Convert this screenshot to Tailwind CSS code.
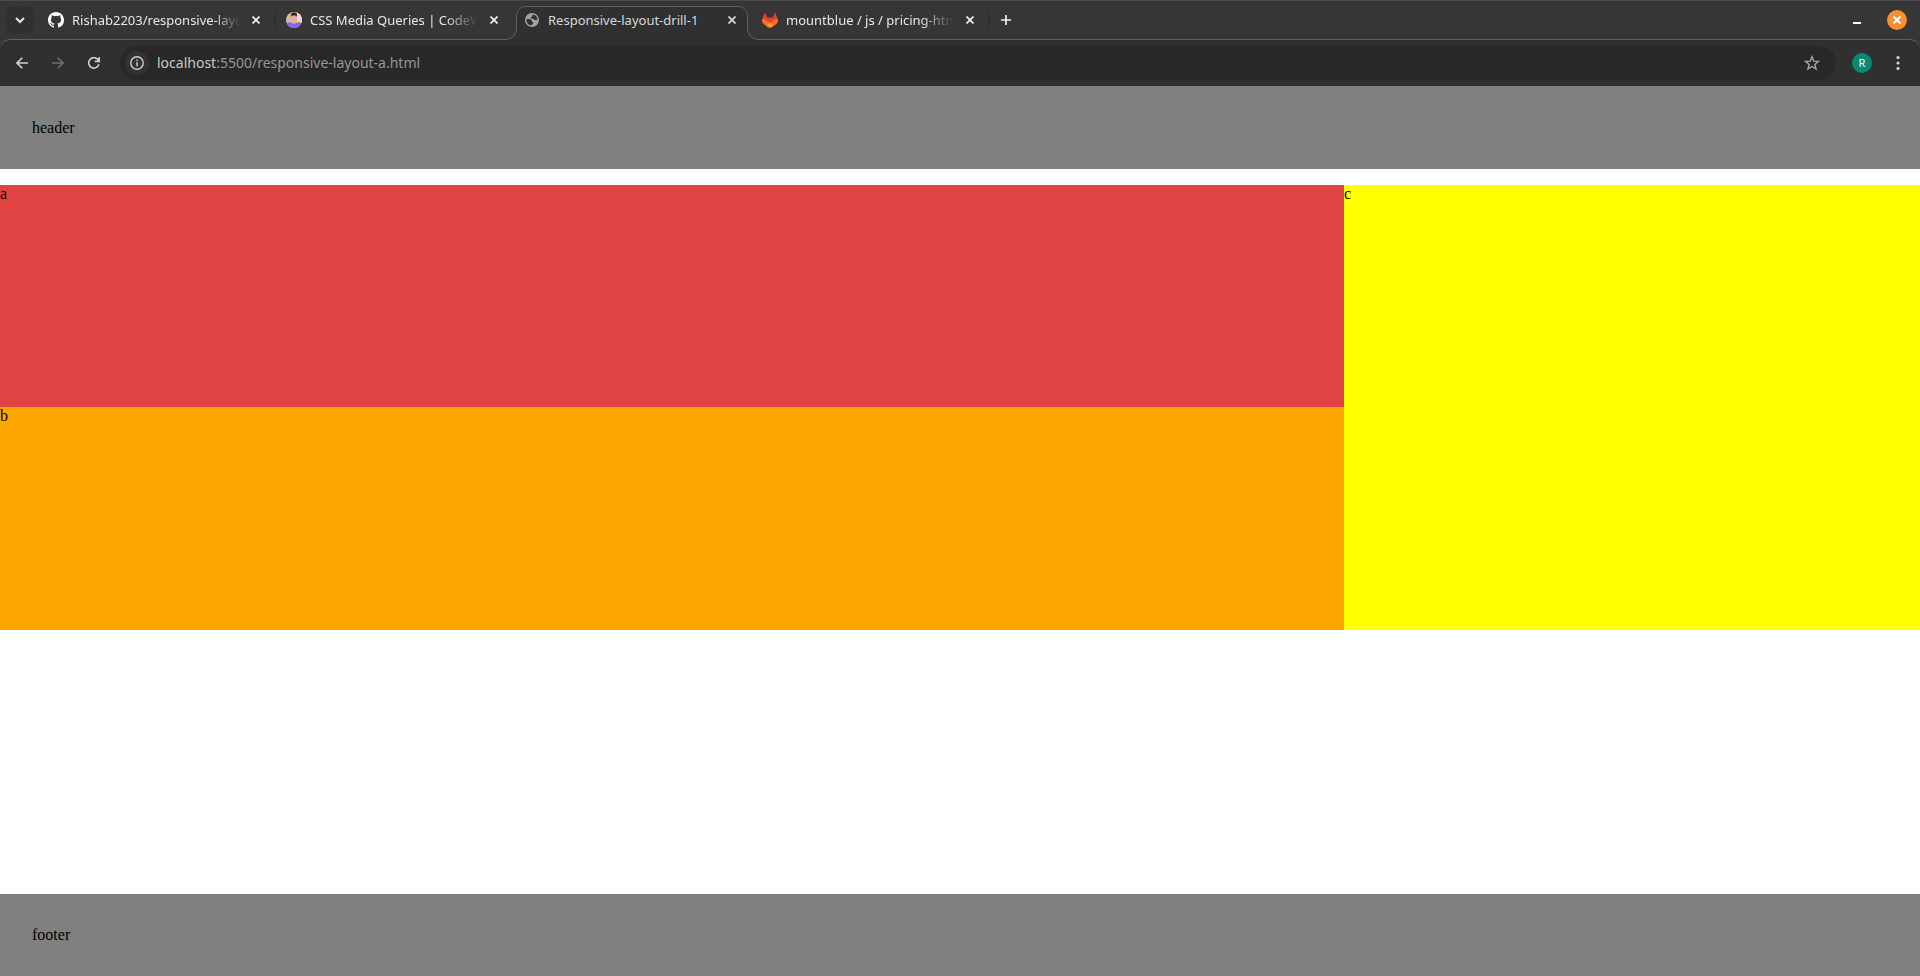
<!DOCTYPE html>
<html lang="en">
<head>
<meta charset="utf-8">
<title>Responsive-layout-drill-1</title>
<script src="https://cdn.jsdelivr.net/npm/@tailwindcss/browser@4"></script>
</head>
<body class="flex min-h-screen flex-col bg-white font-['Liberation_Serif',serif] text-base text-black">

<div class="bg-[#363636] font-['Noto_Sans',sans-serif] text-[#e8e8e8]">
  <nav aria-label="Tabs" class="flex h-[39px] items-center border-t border-[#4b4b4b] px-1.5">
    <button aria-label="Search tabs" class="mr-1.5 flex size-7 items-center justify-center rounded-[10px] bg-[#303030]">
      <svg class="size-2.5" viewBox="0 0 10 10" fill="none" stroke="#e8e8e8" stroke-width="2"><path d="M1 3l4 4 4-4"/></svg>
    </button>

    <div class="flex h-8 w-[232px] items-center px-2">
      <svg class="size-4 shrink-0" viewBox="0 0 16 16" fill="#fff"><path d="M8 0C3.58 0 0 3.58 0 8c0 3.54 2.29 6.53 5.47 7.59.4.07.55-.17.55-.38 0-.19-.01-.82-.01-1.49-2.01.37-2.53-.49-2.69-.94-.09-.23-.48-.94-.82-1.13-.28-.15-.68-.52-.01-.53.63-.01 1.08.58 1.23.82.72 1.21 1.87.87 2.33.66.07-.52.28-.87.51-1.07-1.78-.2-3.64-.89-3.64-3.95 0-.87.31-1.59.82-2.15-.08-.2-.36-1.02.08-2.12 0 0 .67-.21 2.2.82a7.6 7.6 0 0 1 4 0c1.53-1.04 2.2-.82 2.2-.82.44 1.1.16 1.92.08 2.12.51.56.82 1.27.82 2.15 0 3.07-1.87 3.75-3.65 3.95.29.25.54.73.54 1.48 0 1.07-.01 1.93-.01 2.2 0 .21.15.46.55.38A8.01 8.01 0 0 0 16 8c0-4.42-3.58-8-8-8z"/></svg>
      <span class="ml-2 w-[168px] whitespace-nowrap mask-r-from-85% text-[13px] leading-5">Rishab2203/responsive-layo</span>
      <button aria-label="Close tab" class="ml-3 flex size-2 items-center justify-center"><svg class="size-2 shrink-0" viewBox="0 0 8 8" stroke="#f0f0f0" stroke-width="1.7"><path d="M.5.5l7 7M7.5.5l-7 7"/></svg></button>
    </div>
    <span class="mx-0.5 h-4 w-0.5 bg-[#303030]"></span>

    <div class="flex h-8 w-[232px] items-center px-2">
      <svg class="size-4 shrink-0" viewBox="0 0 16 16">
        <clipPath id="face"><circle cx="8" cy="8" r="8"/></clipPath>
        <g clip-path="url(#face)"><path fill="#d8b79c" d="M0 0h16v16H0z"/><path fill="#f0d3d3" d="M11 0h5v11h-5z"/><path fill="#8465f5" d="M1 16c0-3-1-5 2-6l3 1h4l3-1c3 1 2 3 2 6z"/><path fill="#e6a996" d="M5.500 3.500h5V8c0 2-1 4-2.500 4S5.500 10 5.500 8z"/><path fill="#2b2024" d="M5 5C4.500 2 5.500.5 8 .5S11.500 2 11 5l-.8-1.500H5.800z"/></g>
      </svg>
      <span class="ml-2 w-[168px] whitespace-nowrap mask-r-from-80% text-[13px] leading-5">CSS Media Queries | CodeWi</span>
      <button aria-label="Close tab" class="ml-3 flex size-2 items-center justify-center"><svg class="size-2 shrink-0" viewBox="0 0 8 8" stroke="#f0f0f0" stroke-width="1.7"><path d="M.5.5l7 7M7.5.5l-7 7"/></svg></button>
    </div>
    <span class="mx-0.5 w-0.5"></span>

    <div class="relative z-10 flex h-8 w-[232px] items-center px-2">
      <svg class="absolute -left-[11px] top-[2px] h-[34px] w-[254px]" viewBox="0 0 254 34" fill="#303030"><path d="M0 34v-.5C7 33.500 11.500 29 11.500 22V10.500c0-6 4-10 10-10h211c6 0 10 4 10 10V22c0 7 4.500 11.500 11.500 11.500v.5z"/><path fill="none" stroke="#626262" d="M0 33.500c7 0 11.500-4.500 11.500-11.500V10.500c0-6 4-10 10-10h211c6 0 10 4 10 10V22c0 7 4.500 11.500 11.500 11.500"/></svg>
      <svg class="relative size-4 shrink-0" viewBox="0 0 16 16"><circle cx="8" cy="8" r="7" fill="#9da1a8"/><path fill="#303030" d="M2.500 7.200C4 7 6.500 7 7.500 8c.8.900.2 2 1.200 2.200.8.200.8 1 .3 1.500-.6.500-1.500.6-1.500 1.800A5.500 5.500 0 0 1 2.500 7.200zM8.700 2.500c2.600.3 4.600 2.300 4.800 4.800-1 .9-2.700 1-3.500.1-.6-.8-1.500-.4-2.500-.8-1.200-.5-.8-1.900.3-1.900.9 0 .4-1.300.9-2.200z"/></svg>
      <span class="relative ml-2 w-[168px] whitespace-nowrap text-[13px] leading-5 text-[#d8d8d8]">Responsive-layout-drill-1</span>
      <button aria-label="Close tab" class="relative ml-3 flex size-2 items-center justify-center"><svg class="size-2 shrink-0" viewBox="0 0 8 8" stroke="#d8d8d8" stroke-width="1.7"><path d="M.5.5l7 7M7.5.5l-7 7"/></svg></button>
    </div>
    <span class="mx-0.5 w-0.5"></span>

    <div class="flex h-8 w-[232px] items-center px-2">
      <svg class="size-4 shrink-0" viewBox="0 0 16 16"><path fill="#e24329" d="M0 8L2.800.3 5.300 5.500h5.400L13.200.3 16 8l-8 7.700z"/><path fill="#fc6d26" d="M.3 7C2.500 7 5 8 8 11.200 11 8 13.500 7 15.700 7c.8 2.300 0 4-1.700 5.300l-4 3.100H6l-4-3.100C.3 11-.5 9.300.3 7z"/><path fill="#fca326" d="M8 10.600l3 2.300-3 2.900-3-2.900z"/></svg>
      <span class="ml-2 w-[168px] whitespace-nowrap mask-r-from-80% text-[13px] leading-5">mountblue / js / pricing-htm</span>
      <button aria-label="Close tab" class="ml-3 flex size-2 items-center justify-center"><svg class="size-2 shrink-0" viewBox="0 0 8 8" stroke="#f0f0f0" stroke-width="1.7"><path d="M.5.5l7 7M7.5.5l-7 7"/></svg></button>
    </div>
    <span class="ml-0.5 h-4 w-0.5 bg-[#303030]"></span>
    <button aria-label="New tab" class="ml-0.5 flex size-7 items-center justify-center"><svg class="size-2.5" viewBox="0 0 10 10" stroke="#f0f0f0" stroke-width="1.7"><path d="M0 5h10M5 0v10"/></svg></button>

    <div class="ml-auto flex items-center gap-[22px] pr-[7px]">
      <button aria-label="Minimize" class="flex h-5 w-4 items-center justify-center pt-1.5"><span class="h-0.5 w-2 bg-white"></span></button>
      <button aria-label="Close window" class="flex size-5 items-center justify-center rounded-full bg-[#f68f30]"><svg class="size-2" viewBox="0 0 8 8" stroke="#fff" stroke-width="2"><path d="M.5.5l7 7M7.5.5l-7 7"/></svg></button>
    </div>
  </nav>

  <div class="flex h-[47px] items-center rounded-t-[10px] border-t border-[#626262] bg-[#303030] pl-1 pr-2.5">
    <button aria-label="Back" class="flex size-9 items-center justify-center"><svg class="size-3" viewBox="0 0 12 12" fill="none" stroke="#d0d0d0" stroke-width="1.600"><path d="M12 6H1M6.300.7L1 6l5.300 5.300"/></svg></button>
    <button aria-label="Forward" class="flex size-9 items-center justify-center"><svg class="size-3" viewBox="0 0 12 12" fill="none" stroke="#6e6e6e" stroke-width="1.600"><path d="M0 6h11M5.700.7L11 6l-5.300 5.300"/></svg></button>
    <button aria-label="Reload" class="flex size-9 items-center justify-center"><svg class="size-3" viewBox="0 0 12 12" fill="none" stroke="#d0d0d0" stroke-width="1.600"><path d="M10.900 7.300A5.200 5.200 0 1 1 9.800 2.400L11 3.700M11.200 0v4.400H6.800"/></svg></button>
    <div class="ml-2 flex h-[34px] flex-1 items-center rounded-full bg-[#282828] pl-[5px] pr-4">
      <button aria-label="View site information" class="flex size-6 items-center justify-center rounded-full bg-[#333]"><svg class="size-3.5" viewBox="0 0 14 14" fill="none" stroke="#cfcfcf" stroke-width="1.400"><circle cx="7" cy="7" r="6.200"/><path d="M7 6v4.300M7 3.500v1.500"/></svg></button>
      <a href="http://localhost:5500/responsive-layout-a.html" class="ml-2 flex-1 text-sm text-[#979797]"><span class="text-[#c8c8c8]">localhost</span>:5500/responsive-layout-a.html</a>
      <button aria-label="Bookmark this tab" class="flex size-4 items-center justify-center"><svg class="size-4 shrink-0" viewBox="0 0 16 16" fill="none" stroke="#a5a5a5" stroke-width="1.400"><path d="M8 1.800l1.700 4.300 4.700.3-3.600 3 1.200 4.600-4-2.500L4 14l1.200-4.600-3.600-3 4.700-.3z"/></svg></button>
    </div>
    <button aria-label="Profile" class="ml-4 flex size-5 items-center justify-center rounded-full bg-[#068978] text-[11px] text-white">R</button>
    <button aria-label="Menu" class="ml-[14px] flex size-6 items-center justify-center"><svg class="h-3.5 w-1" viewBox="0 0 4 14" fill="#cfcfcf"><circle cx="2" cy="1.600" r="1.600"/><circle cx="2" cy="7" r="1.600"/><circle cx="2" cy="12.400" r="1.600"/></svg></button>
  </div>
</div>

<header class="bg-[gray] px-8 py-8 leading-[19px]">header</header>
<main class="mt-4 mb-8 grid min-h-[445px] grid-cols-[7fr_3fr] grid-rows-[222fr_223fr] leading-[18px]">
  <section class="bg-[#e24444]">a</section>
  <section class="row-span-2 bg-[yellow]">c</section>
  <section class="bg-[orange]">b</section>
</main>
<footer class="mt-auto bg-[gray] px-8 py-8 leading-[18px]">footer</footer>
</body>
</html>
